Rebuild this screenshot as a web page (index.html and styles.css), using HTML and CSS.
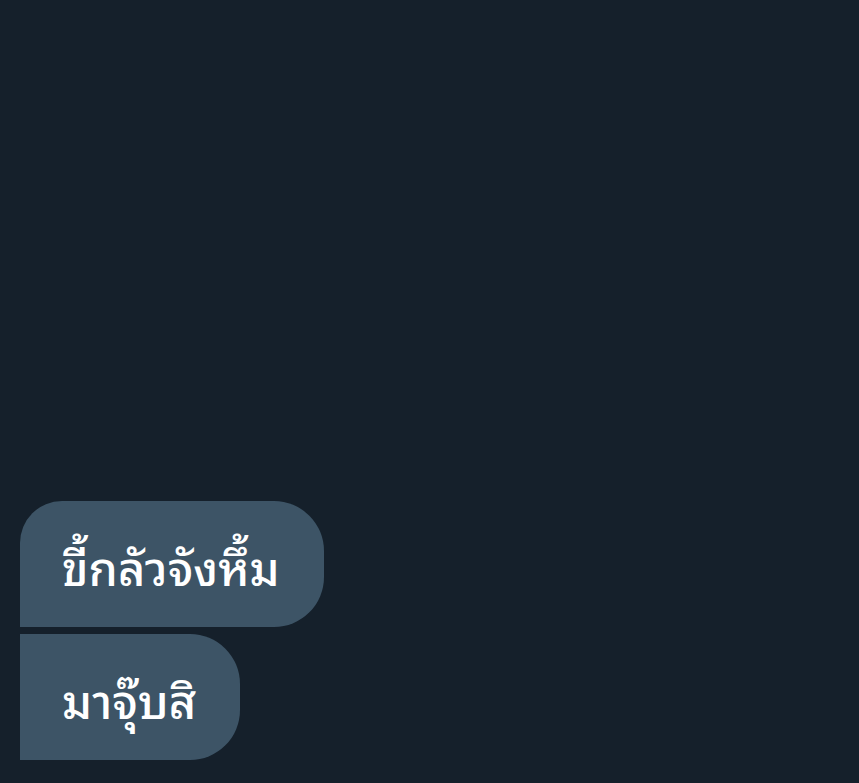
FILE: index.html
```html
<!DOCTYPE html>
<html lang="th">
<head>
<meta charset="utf-8">
<link rel="stylesheet" href="styles.css">
</head>
<body>
<div class="chat">
  <div class="bubble first">ขี้กลัวจังหึ้ม</div>
  <div class="bubble">มาจุ๊บสิ</div>
</div>
</body>
</html>
```
FILE: styles.css
```css
html, body {
  margin: 0;
  padding: 0;
  height: 100%;
  background: #15202b;
}
.chat {
  box-sizing: border-box;
  height: 100%;
  display: flex;
  flex-direction: column;
  justify-content: flex-end;
  align-items: flex-start;
  gap: 7px;
  padding: 0 0 23px 20px;
}
.bubble {
  box-sizing: border-box;
  height: 126px;
  display: flex;
  align-items: center;
  padding: 0 44px 0 42px;
  background: #3d5466;
  color: #ffffff;
  font-family: "Noto Sans Thai Looped", "Loma", sans-serif;
  font-weight: 500;
  font-size: 47px;
  border-radius: 0 50px 50px 0;
}
.bubble.first {
  border-top-left-radius: 42px;
}
```
